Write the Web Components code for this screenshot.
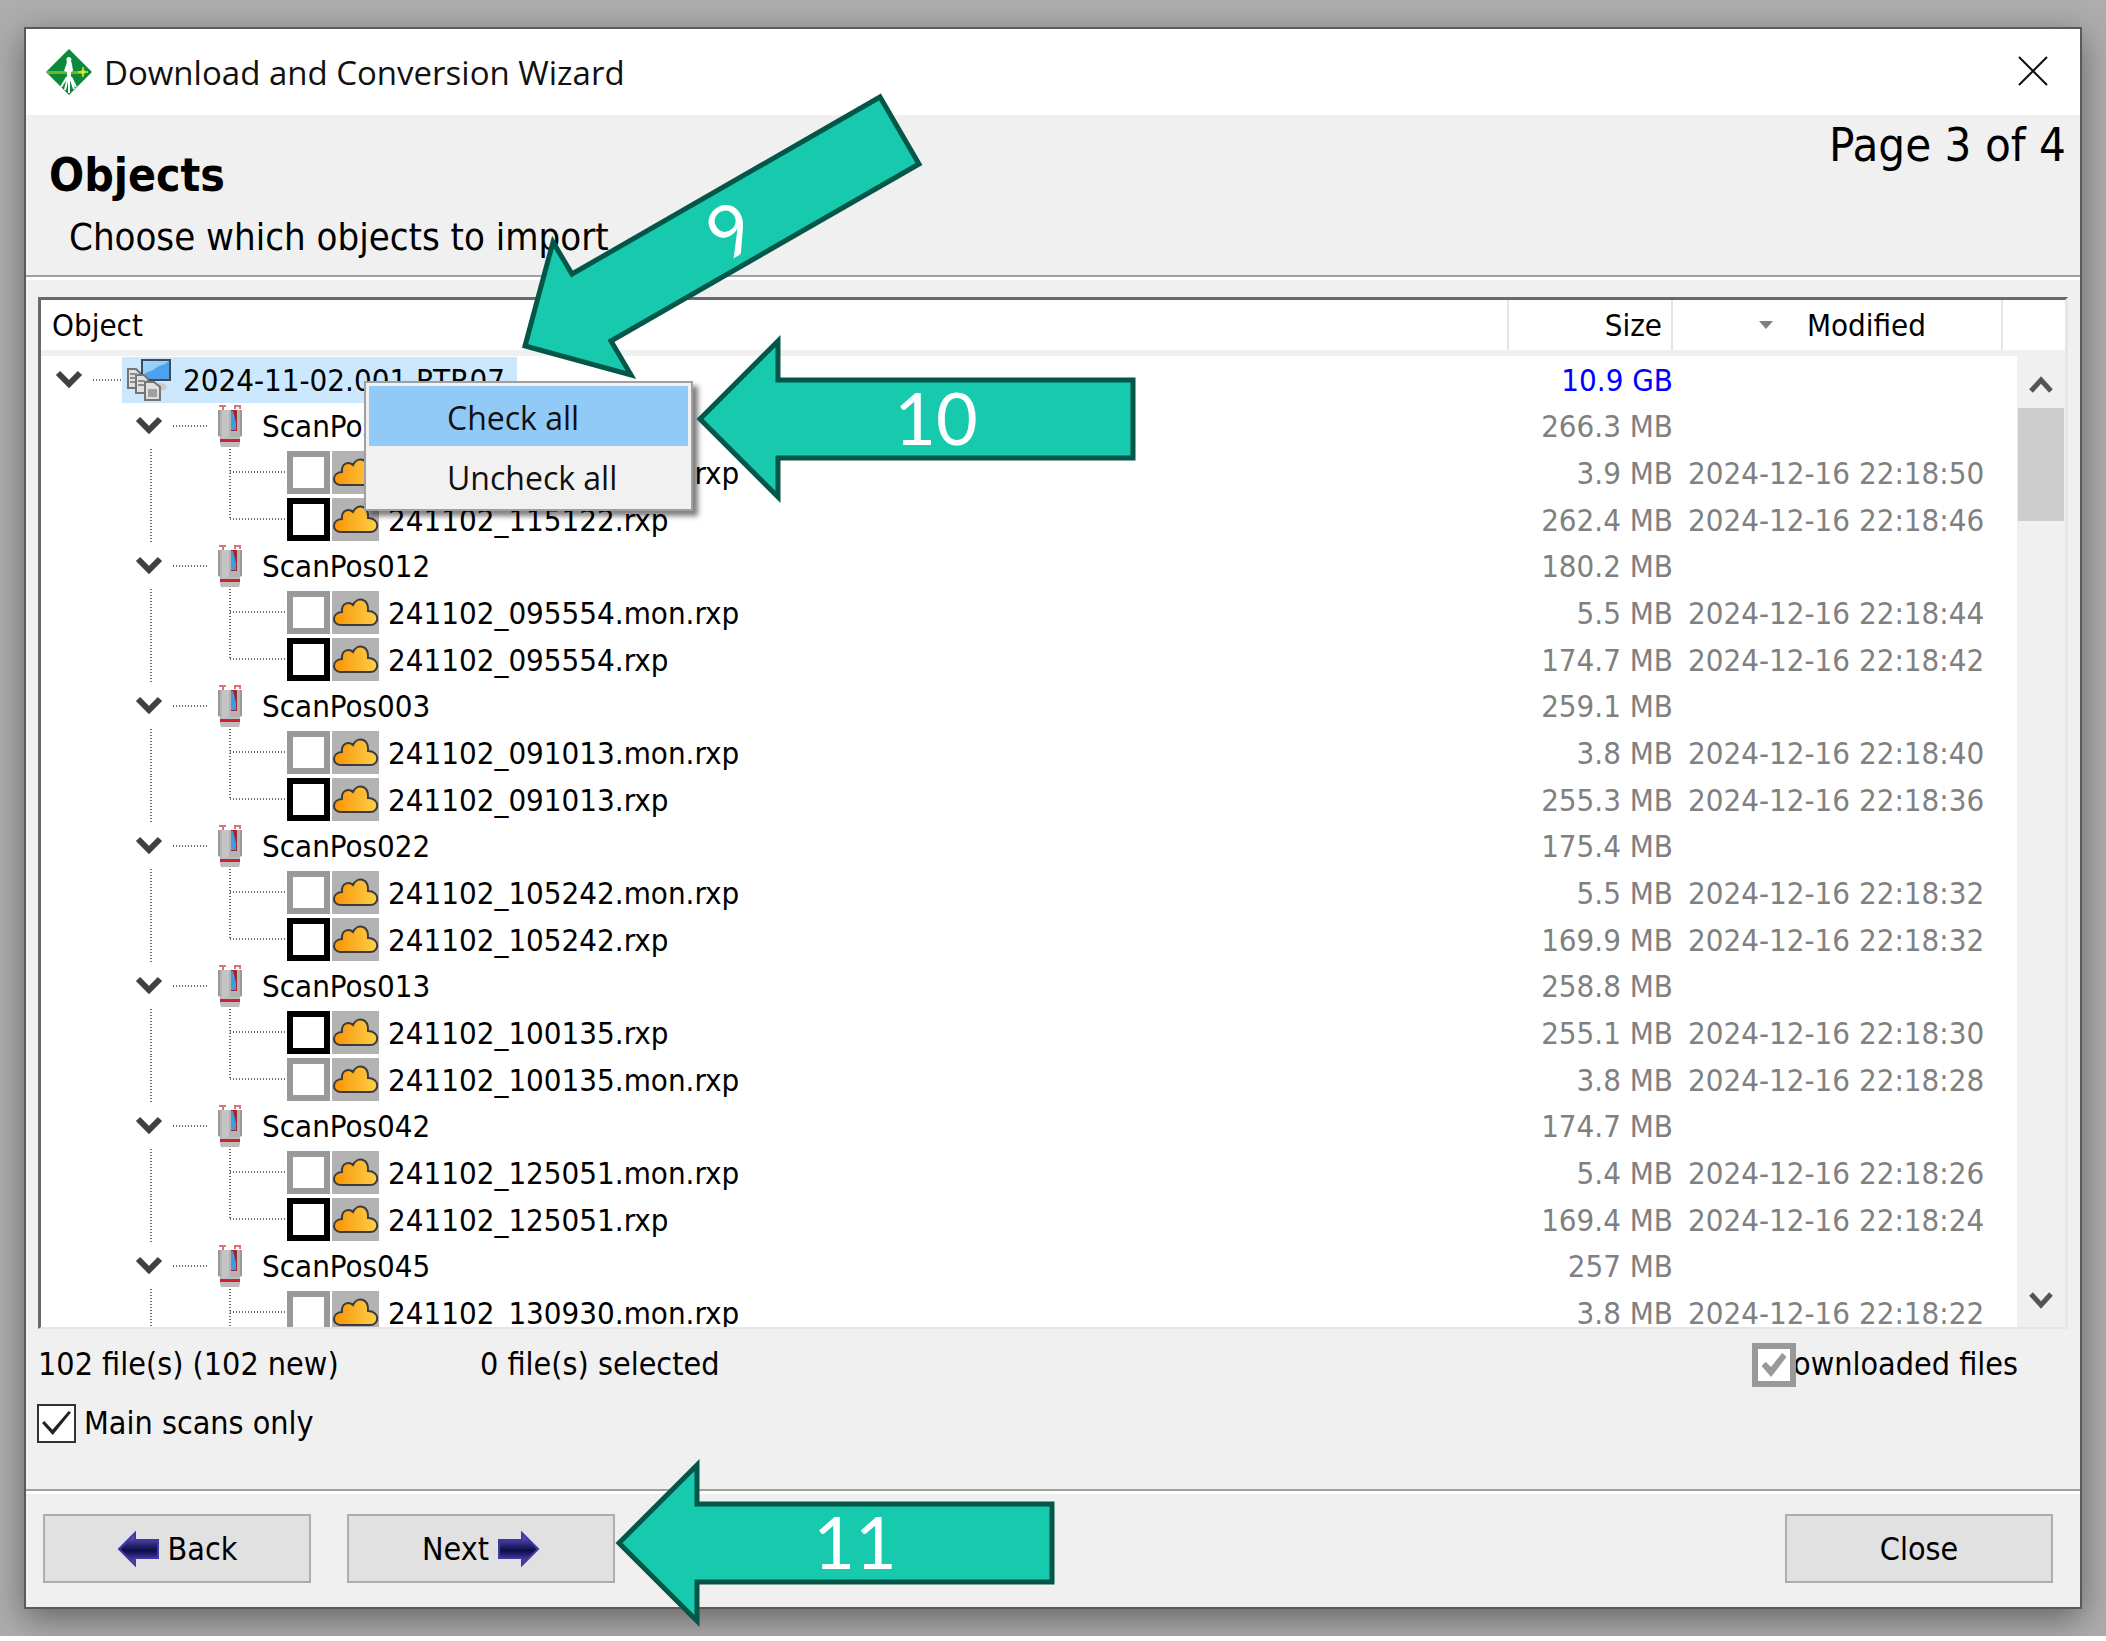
<!DOCTYPE html>
<html lang="en">
<head>
<meta charset="utf-8">
<title>Download and Conversion Wizard</title>
<style>
  html, body { margin: 0; background: #fff; }
  body { font-family: "DejaVu Sans Condensed", "DejaVu Sans", sans-serif; font-size: 31px; line-height: 40px; color: #000; }
</style>
</head>
<body>
<wizard-stage>
  <wizard-window heading="Download and Conversion Wizard">
    <page-header slot="header" heading="Objects" page="Page 3 of 4">Choose which objects to import</page-header>
    <object-tree></object-tree>
    <status-line></status-line>
    <nav-bar slot="footer"></nav-bar>
  </wizard-window>
  <context-menu slot="overlay"></context-menu>
  <callout-arrow slot="overlay" kind="slanted" style="--x:510px;--y:80px" label="9"></callout-arrow>
  <callout-arrow slot="overlay" style="--x:690px;--y:328px" label="10"></callout-arrow>
  <callout-arrow slot="overlay" style="--x:609px;--y:1452px" label="11"></callout-arrow>
</wizard-stage>

<script>
const define = (name, render) => customElements.define(name, class extends HTMLElement {
  constructor() { super(); this.attachShadow({ mode: 'open' }); }
  connectedCallback() { this.shadowRoot.innerHTML = render(this); }
});

define('wizard-stage', () => `
<style>
  :host { display: flex; position: relative; box-sizing: border-box; height: calc(100vh - 5px); padding: 27px 24px; overflow: hidden; background: #adadad; }
  ::slotted(wizard-window) { flex: 1; }
</style>
<slot></slot><slot name="overlay"></slot>`);

define('wizard-window', el => `
<style>
  :host { display: flex; flex-direction: column; min-width: 0; border: 2px solid #5a5a5a; background: #f0f0f0; box-shadow: 0 10px 32px rgba(0,0,0,.42); }
  header { display: flex; align-items: center; gap: 12px; height: 86px; padding: 0 32px 0 20px; background: #fff; box-sizing: border-box; }
  h1 { flex: 1; margin: 0; font: 400 33px/48px "Open Sans", "Noto Sans", sans-serif; padding-top: 2px; color: #111; }
  header button { border: 0; padding: 0; background: none; width: 30px; height: 32px; }
  svg { display: block; }
  main { flex: 1; min-height: 0; display: flex; flex-direction: column; padding: 17px 12px 0; }
  ::slotted(object-tree) { flex: 1; min-height: 0; }
</style>
<header>
  <svg width="46" height="46" viewBox="0 0 46 46"><path d="M23 0 46 23 23 46 0 23Z" fill="#0b8a3c"/><path d="M1 22h35v3H1z" fill="#6cb52d"/><path d="M37 18l1 4 4 1-4 1-1 4-1-4-4-1 4-1z" fill="#f4ee1d" stroke="#c5d92a"/><path d="M22 8c3 0 4 2 3 4l1 3 1 7-2 1v6l-4 0 0-6-3-1 2-6 1-3c-1-2-1-4 1-5z" fill="#fff"/><path d="M21 28 15 38M23 28v16M25 28l5 10M22 28l-3 13M24 28l4 12" stroke="#fff" stroke-width="2" fill="none"/></svg>
  <h1>${el.getAttribute('heading')}</h1>
  <button aria-label="Close window"><svg width="30" height="32" viewBox="0 0 30 32"><path d="M1 1 29 29M29 1 1 29" stroke="#111" stroke-width="2"/></svg></button>
</header>
<slot name="header"></slot>
<main><slot></slot></main>
<slot name="footer"></slot>`);

define('page-header', el => `
<style>
  :host { display: flex; justify-content: space-between; box-sizing: border-box; height: 165px; padding: 0 14px 0 23px; border-bottom: 3px solid #fff; box-shadow: inset 0 -2px #a0a0a0; }
  h2 { margin: 33px 0 0; font-size: 46px; line-height: 54px; }
  p { margin: 12px 0 0 20px; font-size: 38px; line-height: 46px; }
  span { font-size: 47px; line-height: 60px; }
</style>
<div><h2>${el.getAttribute('heading')}</h2><p><slot></slot></p></div>
<span>${el.getAttribute('page')}</span>`);

define('cloud-icon', () => `
<style>:host { display: block; } svg { display: block; }</style>
<svg width="47" height="43" viewBox="0 0 47 43">
  <defs><linearGradient id="g" x1="0" y1="0" x2="1" y2="0"><stop offset=".1" stop-color="#f99a0c"/><stop offset="1" stop-color="#ffcf4a"/></linearGradient></defs>
  <path fill="#b3b3b3" d="M0 0h47v43H0z"/>
  <path d="M9 34C0 34-1 22 10 21 9 12 17 10 21 14 25 5 37 7 36 20 48 20 48 34 38 34Z" fill="url(#g)" stroke="#3c3c3c" stroke-width="2"/>
</svg>`);

define('scanner-icon', () => `
<style>:host { display: block; } svg { display: block; }</style>
<svg width="24" height="42" viewBox="0 0 24 42">
  <path d="M1 0h7v2H6v3H4V2H1zM16 0h7v4h-2V2h-3v2h-2z" fill="#dd7474"/>
  <path d="M0 5h24v26l-2 1H2l-2-1z" fill="#b4b4b4"/><path d="M4 5h7v27H4z" fill="#c4c4c4"/><path d="M0 5h2v26H0zM22 5h2v26h-2z" fill="#989898"/>
  <path d="M13 5h6v21h-6z" fill="#a8222b"/><path d="M13 6h2l3 12v7h-5z" fill="#3a9fdc"/>
  <path d="M2 32h20v7l-1 3H3l-1-3z" fill="#bdbdbd"/><path d="M2 34h20v3H2z" fill="#d0202c"/>
</svg>`);

define('project-icon', () => `
<style>:host { display: block; } svg { display: block; }</style>
<svg width="46" height="44" viewBox="0 0 46 44">
  <defs><linearGradient id="s" x1="0" y1="0" x2="1" y2="1"><stop stop-color="#a5d6fa"/><stop offset="1" stop-color="#7cc0f5"/></linearGradient></defs>
  <ellipse cx="32" cy="29" rx="8" ry="4" fill="#c9c9c9"/>
  <path d="M15 2h28v20H15z" fill="url(#s)" stroke="#3e4a55" stroke-width="2"/><path d="M16 17c6-5 9-3 13-7 4-3 8-2 13-7v18H16z" fill="#4ba3ee"/>
  <g fill="#e0e0e0" stroke="#757575" stroke-width="2"><path d="M1 11h8l4 4v15H1z"/><path d="M9 17h8l4 4v14H9z"/><path d="M18 24h9l6 5v13H18z"/></g>
  <path d="M3 16h7M3 20h6M3 24h5M11 23h7M11 27h6" stroke="#8c8c8c" stroke-width="2"/><path d="M21 31h9v8h-9z" fill="#a0a0a0"/>
</svg>`);

const scans = [
  ['ScanPos011', '266.3 MB', ['241102_115122.mon.rxp', '3.9 MB', '50', 1], ['241102_115122.rxp', '262.4 MB', '46']],
  ['ScanPos012', '180.2 MB', ['241102_095554.mon.rxp', '5.5 MB', '44', 1], ['241102_095554.rxp', '174.7 MB', '42']],
  ['ScanPos003', '259.1 MB', ['241102_091013.mon.rxp', '3.8 MB', '40', 1], ['241102_091013.rxp', '255.3 MB', '36']],
  ['ScanPos022', '175.4 MB', ['241102_105242.mon.rxp', '5.5 MB', '32', 1], ['241102_105242.rxp', '169.9 MB', '32']],
  ['ScanPos013', '258.8 MB', ['241102_100135.rxp', '255.1 MB', '30'], ['241102_100135.mon.rxp', '3.8 MB', '28', 1]],
  ['ScanPos042', '174.7 MB', ['241102_125051.mon.rxp', '5.4 MB', '26', 1], ['241102_125051.rxp', '169.4 MB', '24']],
  ['ScanPos045', '257 MB', ['241102_130930.mon.rxp', '3.8 MB', '22', 1]]
];
const expander = '<button class="exp" aria-label="Collapse"><svg width="28" height="20" viewBox="0 0 28 20"><path d="M3 3 14 14 25 3" fill="none" stroke="#404040" stroke-width="6"/></svg></button>';
const fileRow = (f, last) => `<tr class="file"><td><div class="cell">
  <svg class="guide" width="246" height="47"><path d="M110 0V47M189 0V${last ? 24 : 47}M189 23H245" fill="none" stroke="#6e6e6e" stroke-width="2" stroke-dasharray="1 2"/></svg>
  <input type="checkbox" class="${f[3] ? 'dim' : ''}" aria-label="${f[0]}"><cloud-icon></cloud-icon><span class="name">${f[0]}</span></div></td>
  <td>${f[1]}</td><td>2024-12-16 22:18:${f[2]}</td><td></td></tr>`;

define('object-tree', () => `
<style>
  :host { display: grid; grid-template: 56px minmax(0, 1fr) / minmax(0, 1fr) 48px; overflow: hidden; background: #fff;
    border: 3px solid #696969; border-right-color: #e6e6e6; border-bottom-color: #e6e6e6; border-bottom-width: 2px; }
  table { grid-area: 1 / 1 / 3 / 3; align-self: start; width: 100%; border-collapse: separate; border-spacing: 0; table-layout: fixed; }
  th { box-sizing: border-box; height: 56px; padding: 0 11px; font-weight: 400; text-align: left; border-bottom: 6px solid #f0f0f0; background: linear-gradient(#e5e5e5, #e5e5e5) right / 2px 100% no-repeat; white-space: nowrap; }
  th:last-child { background: none; }
  th:nth-child(2) { text-align: right; }
  .sort { display: flex; align-items: center; justify-content: flex-end; gap: 34px; padding-right: 66px; }
  td { padding: 0; white-space: nowrap; color: #808080; }
  td:nth-child(2) { text-align: right; }
  td:nth-child(3) { padding-left: 15px; }
  td:first-child { color: #000; }
  tr.total td:nth-child(2) { color: #00f; }
  tr, .cell { height: 47px; }
  tr.scan, .scan .cell { height: 46px; }
  .cell { display: flex; align-items: center; }
  svg { display: block; }
  .exp { width: 28px; height: 20px; padding: 0; border: 0; background: none; }
  .total .exp { margin-left: 14px; }
  .total .dots { margin-left: 10px; }
  .pick { display: flex; align-items: center; gap: 10px; height: 46px; padding: 0 12px 0 5px; background: #cce8ff; }
  .scan .exp { margin-left: 94px; }
  .scan .dots { margin: 0 11px 0 10px; }
  .scan .name { margin-left: 20px; }
  .file .name { margin-left: 9px; }
  cloud-icon { margin-left: 2px; }
  input { appearance: none; box-sizing: border-box; flex: none; width: 43px; height: 43px; margin: 0; border: 6px solid #000; background: #fff; }
  input.dim { border-color: #999; }
  nav { grid-area: 2 / 2; display: flex; flex-direction: column; align-items: center; background: #f0f0f0; }
  nav button { display: grid; place-items: center; width: 100%; height: 52px; padding: 6px 0 0; border: 0; background: none; box-sizing: border-box; }
  nav button:last-of-type { padding: 0 0 2px; }
  nav i { width: 46px; height: 113px; margin-bottom: auto; background: #cdcdcd; }
</style>
<table>
  <colgroup><col><col style="width:164px"><col style="width:330px"><col style="width:62px"></colgroup>
  <thead><tr><th>Object</th><th>Size</th><th><div class="sort"><svg width="14" height="8"><path d="M0 0h14L7 8z" fill="#808080"/></svg>Modified</div></th><th></th></tr></thead>
  <tbody>
    <tr class="total"><td><div class="cell">${expander}<svg class="dots" width="29" height="2"><path d="M0 1h29" stroke="#6e6e6e" stroke-width="2" stroke-dasharray="1 2"/></svg><span class="pick"><project-icon></project-icon>2024-11-02.001.RTR07</span></div></td><td>10.9 GB</td><td></td><td></td></tr>
    ${scans.map(([name, size, ...files]) => `<tr class="scan"><td><div class="cell">${expander}<svg class="dots" width="34" height="2"><path d="M0 1h34" stroke="#6e6e6e" stroke-width="2" stroke-dasharray="1 2"/></svg><scanner-icon></scanner-icon><span class="name">${name}</span></div></td><td>${size}</td><td></td><td></td></tr>
    ${files.map((f, i) => fileRow(f, i === 1)).join('')}`).join('')}
  </tbody>
</table>
<nav aria-label="Scroll">
  <button aria-label="Up"><svg width="24" height="20"><path d="M2 16 12 5 22 16" fill="none" stroke="#555" stroke-width="5"/></svg></button>
  <i></i>
  <button aria-label="Down"><svg width="24" height="20"><path d="M2 4 12 15 22 4" fill="none" stroke="#555" stroke-width="5"/></svg></button>
</nav>`);

define('status-line', () => `
<style>
  :host { display: grid; grid-template-columns: 442px 1fr auto; align-items: center; row-gap: 16px; height: 160px; align-content: start; padding: 12px 50px 0 0; box-sizing: border-box; font-size: 32px; }
  label { display: flex; align-items: center; }
  .done input { z-index: 1; width: 44px; height: 44px; margin: 2px -3px 0 0; border: 6px solid #999; }
  .main { gap: 8px; }
  .main input { width: 39px; height: 39px; border: 2px solid #333; margin: 0 0 0 -1px; }
  input { appearance: none; display: grid; place-items: center; box-sizing: border-box; position: relative; background: #fff; }
  input::before { content: ""; width: 29px; height: 24px; background: #222; clip-path: polygon(0 50%, 8% 42%, 36% 78%, 92% 0, 100% 6%, 37% 100%); }
  .done input::before { width: 25px; height: 24px; background: #999; clip-path: polygon(0 54%, 16% 36%, 38% 58%, 82% 0, 100% 16%, 38% 100%); }
</style>
<span>102 file(s) (102 new)</span><span>0 file(s) selected</span>
<label class="done"><input type="checkbox" checked>ownloaded files</label>
<label class="main"><input type="checkbox" checked>Main scans only</label>`);

const arrow = (id, d) => `<svg width="42" height="36" viewBox="0 0 42 36"><defs><linearGradient id="${id}" x1="0" y1="0" x2="0" y2="1"><stop stop-color="#7a6fd0"/><stop offset=".35" stop-color="#2b2a78"/><stop offset=".55" stop-color="#0c0c4a"/><stop offset="1" stop-color="#6a5cd0"/></linearGradient></defs><path d="${d}" fill="url(#${id})" stroke="#4536a8" stroke-width="2"/></svg>`;
define('nav-bar', () => `
<style>
  :host { display: flex; gap: 36px; box-sizing: border-box; height: 118px; padding: 23px 27px 22px 17px; border-top: 2px solid #a0a0a0; box-shadow: inset 0 3px #fff; font-size: 32px; }
  button { display: flex; align-items: center; justify-content: center; gap: 9px; width: 268px; height: 69px; padding: 0; border: 2px solid #adadad; background: #e1e1e1; font: inherit; color: #000; box-sizing: border-box; }
  button:last-child { margin-left: auto; }
</style>
<button>${arrow('b', 'M2 18 18 2V9H41V27H18V34Z')}Back</button>
<button>Next${arrow('n', 'M40 18 24 2V9H1V27H24V34Z')}</button>
<button>Close</button>`);

define('context-menu', () => `
<style>
  :host { position: absolute; left: 364px; top: 381px; display: flex; flex-direction: column; box-sizing: border-box; width: 329px; padding: 3px; border: 2px solid #a0a0a0; background: #f1f1f1; box-shadow: 5px 5px 5px rgba(0,0,0,.5); }
  button { box-sizing: border-box; height: 60px; padding: 4px 0 0 78px; border: 0; background: none; text-align: left; font: 400 32px/56px "Open Sans", "Noto Sans", sans-serif; color: #111; }
  button:first-of-type { background: #91c9f7; }
</style>
<button>Check all</button><button>Uncheck all</button>`);

define('callout-arrow', el => {
  const slanted = el.getAttribute('kind') === 'slanted', label = el.getAttribute('label');
  const shape = slanted ? 'M15 266 43 162 62 194 370 17 409 84 101 261 121 295Z' : 'M10 91 88 13V52H443V130H88V169Z';
  const text = slanted ? '<text transform="translate(221 151) rotate(-30)" x="0" y="25">' : '<text x="246" y="117">';
  return `
<style>
  :host { position: absolute; left: var(--x); top: var(--y); pointer-events: none; }
  svg { display: block; }
  text { font: 400 72px Lato, sans-serif; fill: #fff; text-anchor: middle; }
</style>
<svg width="${slanted ? 425 : 452}" height="${slanted ? 310 : 182}"><path d="${shape}" fill="#17caae" stroke="#045748" stroke-width="5" stroke-miterlimit="10"/>${text}${label}</text></svg>`;
});
</script>
</body>
</html>
